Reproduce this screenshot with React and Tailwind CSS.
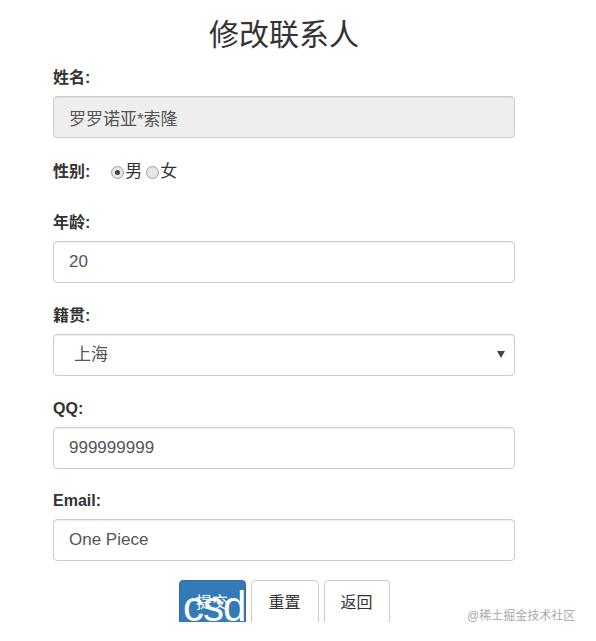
import { useState } from 'react'

const font = { fontFamily: '"Liberation Sans", "Noto Sans CJK SC", sans-serif' }

function Field({ label, children, className = '' }) {
  return (
    <div className={className}>
      <label className="block h-[22px] leading-[22px] text-[16px] font-bold text-[#333] mb-[7px]">{label}</label>
      {children}
    </div>
  )
}

const inputCls =
  'block w-full h-[42px] px-[15px] text-[17px] text-[#555] border border-[#ccc] rounded-[4px] shadow-[inset_0_1px_1px_rgba(0,0,0,0.075)] outline-none'

function Radio({ checked, onChange, children }) {
  return (
    <label className="flex items-center text-[17px] cursor-pointer" onClick={onChange}>
      <span className="w-[13px] h-[13px] mr-[1px] rounded-full border border-[#a0a0a0] bg-[#e6e6e6] flex items-center justify-center">
        {checked && <span className="w-[5px] h-[5px] rounded-full bg-[#444]" />}
      </span>
      {children}
    </label>
  )
}

export default function App() {
  const [sex, setSex] = useState('男')
  const [age, setAge] = useState('20')
  const [qq, setQq] = useState('999999999')
  const [email, setEmail] = useState('One Piece')
  const [city, setCity] = useState('上海')

  return (
    <div className="relative w-[596px] h-[641px] bg-white overflow-hidden" style={font}>
      <div className="w-[462px] ml-[53px]">
        {/* Title */}
        <h1 className="mt-[14px] h-[42px] leading-[42px] text-center text-[30px] font-normal text-[#333]">修改联系人</h1>

        <Field label="姓名:" className="mt-[11px]">
          <input className={`${inputCls} bg-[#eee]`} value="罗罗诺亚*索隆" disabled readOnly />
        </Field>

        {/* Gender */}
        <div className="mt-[23px] h-[22px] flex items-center text-[#333]">
          <span className="text-[16px] font-bold mr-[21px]">性别:</span>
          <Radio checked={sex === '男'} onChange={() => setSex('男')}>男</Radio>
          <span className="w-[4px]" />
          <Radio checked={sex === '女'} onChange={() => setSex('女')}>女</Radio>
        </div>

        <Field label="年龄:" className="mt-[29px]">
          <input className={inputCls} value={age} onChange={e => setAge(e.target.value)} />
        </Field>

        <Field label="籍贯:" className="mt-[22px]">
          <div className="relative">
            <select
              className={`${inputCls} appearance-none bg-white pl-[20px]`}
              value={city}
              onChange={e => setCity(e.target.value)}
            >
              <option>北京</option>
              <option>上海</option>
              <option>广州</option>
            </select>
            <span className="pointer-events-none absolute right-[10px] top-[17px] w-0 h-0 border-l-[4px] border-r-[4px] border-t-[7px] border-l-transparent border-r-transparent border-t-[#444]" />
          </div>
        </Field>

        <Field label="QQ:" className="mt-[22px]">
          <input className={inputCls} value={qq} onChange={e => setQq(e.target.value)} />
        </Field>

        <Field label="Email:" className="mt-[21px]">
          <input className={inputCls} value={email} onChange={e => setEmail(e.target.value)} />
        </Field>

        {/* Buttons (cut off at the bottom in the capture) */}
        <div className="relative mt-[19px] h-[42px] overflow-hidden flex justify-center gap-[5px]">
          <button className="w-[67px] h-[46px] rounded-[4px] bg-[#337ab7] border border-[#2e6da4] text-white text-[16px]">提交</button>
          <button className="w-[68px] h-[46px] rounded-[4px] bg-white border border-[#ccc] text-[#333] text-[16px]">重置</button>
          <button className="w-[66px] h-[46px] rounded-[4px] bg-white border border-[#ccc] text-[#333] text-[16px]">返回</button>
          <span className="absolute left-[130px] top-[6px] text-[42px] leading-[42px] text-white tracking-[-1px]">csd</span>
        </div>
      </div>

      {/* Watermark */}
      <span className="absolute left-[467px] top-[607px] text-[12px] text-[#aaa]">@稀土掘金技术社区</span>
    </div>
  )
}
